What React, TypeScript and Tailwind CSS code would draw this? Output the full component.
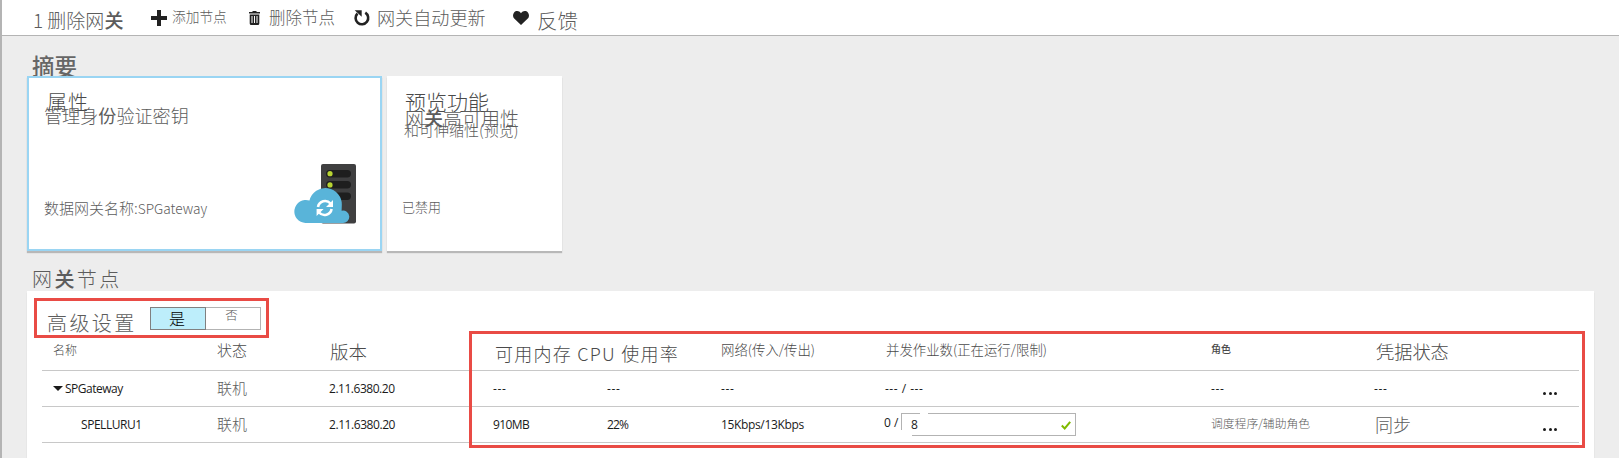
import React from "react";

const cjk = "block whitespace-nowrap font-['Noto_Sans_CJK_SC',sans-serif] font-light";
const latin = "block whitespace-nowrap font-['Open_Sans','Noto_Sans_CJK_SC',sans-serif] text-[12px] leading-[16px] text-[#1a1a1a]";

function PlusIcon() {
  return (
    <svg width="16" height="16" viewBox="0 0 16 16" className="block" fill="#222">
      <path d="M6 0h4v6h6v4h-6v6H6v-6H0V6h6z" />
    </svg>
  );
}

function TrashIcon() {
  return (
    <svg width="11" height="14" viewBox="0 0 11 14" className="block" fill="#222">
      <path d="M3.500 0h4v1H11v1.600H0V1h3.500z" />
      <path fillRule="evenodd" d="M.7 3.400h9.600V12.500q0 1.500-1.500 1.500H2.200Q.7 14 .7 12.500zM2.500 5v7h1V5zM5 5v7h1V5zM7.500 5v7h1V5z" />
    </svg>
  );
}

function RefreshIcon() {
  return (
    <svg width="16" height="16" viewBox="0 0 16 16" className="block">
      <path d="M11.300 2.700A6.300 6.300 0 1 1 3.500 3.500" fill="none" stroke="#222" strokeWidth="2.600" />
      <path d="M.7.300h7v6.500z" fill="#222" />
    </svg>
  );
}

function HeartIcon() {
  return (
    <svg width="16" height="14" viewBox="0 0 16 14" className="block" fill="#222">
      <path d="M8 14 1.200 7.600C-.4 5.900-.3 3 1.100 1.400 2.900-.5 6.300-.4 8 2.200 9.700-.4 13.100-.5 14.900 1.400 16.300 3 16.400 5.900 14.800 7.600z" />
    </svg>
  );
}

function GatewayIcon() {
  return (
    <svg width="62" height="60" viewBox="0 0 62 60" className="block">
      <rect x="27" y="0" width="35" height="59.500" rx="2" fill="#3f3f40" />
      <rect x="32" y="6" width="25" height="7.500" rx="3.700" fill="#1e1e1e" />
      <rect x="32" y="17" width="25" height="7.500" rx="3.700" fill="#1e1e1e" />
      <rect x="32" y="28.500" width="25" height="7.500" rx="3.700" fill="#1e1e1e" />
      <circle cx="36" cy="9.700" r="2.600" fill="#b8d432" />
      <circle cx="36" cy="20.900" r="2.600" fill="#b8d432" />
      <path
        d="M11.500 59A11.500 11.500 0 1 1 15.500 36.600 16.400 16.400 0 0 1 47.800 41.500L47.600 46.800A6.200 6.200 0 1 1 48.500 59z"
        fill="#59b4d9"
      />
      <g fill="none" stroke="#fff" strokeWidth="2.600">
        <path d="M24 43A7.200 7.200 0 0 1 36.500 39.500" />
        <path d="M37.600 45A7.200 7.200 0 0 1 25.100 48.500" />
      </g>
      <path d="M39 36v7h-7zM22.600 52v-7h7z" fill="#fff" />
    </svg>
  );
}

function Toolbar() {
  return (
    <header className="flex h-[36px] shrink-0 items-start border-b border-[#b4b4b4] bg-white text-[#5c5c5c]">
      <span className={`${cjk} ml-[31px] w-[118px] pt-[10px] text-[19px] leading-[19px]`}>1 删除网<span className="font-medium">关</span></span>
      <span className="w-[21px] pt-[10px]"><PlusIcon /></span>
      <span className={`${cjk} w-[77px] pt-[9px] text-[13.7px] leading-[14px]`}>添加节点</span>
      <span className="w-[20px] pt-[11px]"><TrashIcon /></span>
      <span className={`${cjk} w-[85px] pt-[9px] text-[16.500px] leading-[16px]`}>删除节点</span>
      <span className="w-[23px] pt-[10px]"><RefreshIcon /></span>
      <span className={`${cjk} w-[136px] pt-[8px] text-[18.100px] leading-[18px]`}>网关自动更新</span>
      <span className="w-[24px] pt-[11px]"><HeartIcon /></span>
      <span className={`${cjk} pt-[10px] text-[20.500px] leading-[20px]`}>反馈</span>
    </header>
  );
}

function SummaryCards() {
  return (
    <div className="flex gap-[5px]">
      <article className="flex h-[175px] w-[355px] justify-between border-2 border-[#9ad5f3] bg-white text-[#5c5c5c] shadow-[0_2px_1px_#b8b8b8]">
        <div className="pl-[15px]">
          <h3 className={`${cjk} mt-[14px] pl-[3px] text-[20px] leading-[20px] tracking-[1px] text-[#4a4a4a]`}>属性</h3>
          <p className={`${cjk} mt-[-6px] text-[18.100px] leading-[18px]`}>管理身<span className="font-normal">份</span>验证密钥</p>
          <p className={`${cjk} mt-[76px] text-[15px] leading-[15px]`}>
            数据网关名称:<span className="text-[13.7px]">SPGateway</span>
          </p>
        </div>
        <div className="mr-[24px] mt-[86px]"><GatewayIcon /></div>
      </article>
      <article className="h-[175px] w-[175px] bg-white pl-[16px] text-[#5c5c5c] shadow-[0_2px_1px_#b8b8b8]">
        <h3 className={`${cjk} pl-[2px] pt-[15px] text-[21px] leading-[20px] text-[#4a4a4a]`}>预览功能</h3>
        <p className={`${cjk} mt-[-2px] pl-[2px] text-[19px] leading-[18px]`}>网<span className="font-medium">关</span>高可用性</p>
        <p className={`${cjk} mt-[-5px] pl-[1px] text-[15px] leading-[15px]`}>和可伸缩性(预览)</p>
        <p className={`${cjk} ml-[-1px] mt-[63px] text-[13px] leading-[13px]`}>已禁用</p>
      </article>
    </div>
  );
}

function AdvancedToggle() {
  return (
    <div className="ml-[7px] flex h-[40px] w-[235px] border-[3px] border-[#e94b45] text-[#5c5c5c]">
      <span className={`${cjk} w-[113px] pl-[10px] pt-[12px] text-[20px] leading-[20px] tracking-[2.400px]`}>高级设置</span>
      <div className="mt-[6px] flex h-[23px]">
        <button className={`${cjk} flex h-[23px] w-[56px] justify-center border border-[#808080] bg-[#bdeefb] pr-[2px] pt-[2px] text-[16px] leading-[16px] text-black`}>是</button>
        <button className={`${cjk} flex h-[23px] w-[55px] justify-center border border-l-0 border-[#b3b3b3] pr-[3px] pt-[1px] text-[12.500px] leading-[12px]`}>否</button>
      </div>
    </div>
  );
}

const row =
  "grid grid-cols-[175px_113px_163px_114px_114px_164px_326px_164px_168px_36px] border-b border-[#c8c8c8]";

function More() {
  return (
    <button aria-label="More" className="mt-[21px] flex h-[3px] gap-[2.500px]">
      <i className="block size-[3px] rounded-full bg-[#1a1a1a]" />
      <i className="block size-[3px] rounded-full bg-[#1a1a1a]" />
      <i className="block size-[3px] rounded-full bg-[#1a1a1a]" />
    </button>
  );
}

function JobLimit() {
  return (
    <div className="flex">
      <span className={`${latin} ml-[-1px] w-[17px] pt-[8px]`}>0 /</span>
      <div className="relative mt-[6px] flex h-[23px] w-[175px] border border-[#b3b3b3]">
        <span className="absolute -top-px left-[18px] h-px w-[8px] bg-white" />
        <span className="absolute -bottom-px -left-px h-[6px] w-px bg-white" />
        <span className="absolute -bottom-px -left-px h-px w-[11px] bg-white" />
        <span className={`${latin} flex-1 pl-[9px] pt-[3px]`}>8</span>
        <svg width="10" height="9" viewBox="0 0 10 9" className="mr-[4px] mt-[7px]">
          <path d="M.8 4.500 3.700 7.400 9.200.8" fill="none" stroke="#7fba00" strokeWidth="2" />
        </svg>
      </div>
    </div>
  );
}

function NodesTable() {
  return (
    <div className="relative ml-[15px] w-[1537px]">
      <div className={`${row} h-[33px] text-[#4a4a4a]`}>
        <span className={`${cjk} pl-[11px] pt-[6px] text-[12px] leading-[12px]`}>名称</span>
        <span className={`${cjk} pt-[4px] text-[15px] leading-[15px]`}>状态</span>
        <span className={`${cjk} pt-[4px] text-[18.500px] leading-[18px]`}>版本</span>
        <span className={`${cjk} pl-[2px] pt-[6px] text-[18px] leading-[18px] tracking-[1.250px]`}>可用内存 CPU 使用率</span>
        <span />
        <span className={`${cjk} pt-[4px] text-[13.400px] leading-[14px]`}>网络(传入/传出)</span>
        <span className={`${cjk} pl-px pt-[4px] text-[13.400px] leading-[14px]`}>并发作业数(正在运行/限制)</span>
        <span className="block whitespace-nowrap pt-[6px] font-['Noto_Sans_CJK_SC',sans-serif] text-[10px] font-medium leading-[10px]">角色</span>
        <span className={`${cjk} pl-px pt-[4px] text-[18.200px] leading-[18px]`}>凭据状态</span>
        <span />
      </div>
      <div className={`${row} h-[36px]`}>
        <span className={`${latin} flex pl-[11px] pt-[10px] tracking-[-0.5px]`}>
          <svg width="10" height="5" viewBox="0 0 10 5" className="mr-[2px] mt-[5px]">
            <path d="M0 0h10L5 5z" fill="#1a1a1a" />
          </svg>
          SPGateway
        </span>
        <span className={`${cjk} pt-[9px] text-[15px] leading-[15px] text-[#5c5c5c]`}>联机</span>
        <span className={`${latin} -ml-px pt-[10px] tracking-[-0.47px]`}>2.11.6380.20</span>
        <span className={`${latin} pt-[10px] tracking-[0.7px]`}>---</span>
        <span className={`${latin} pt-[10px] tracking-[0.7px]`}>---</span>
        <span className={`${latin} pt-[10px] tracking-[0.7px]`}>---</span>
        <span className={`${latin} pt-[10px] tracking-[0.5px]`}>--- / ---</span>
        <span className={`${latin} pt-[10px] tracking-[0.7px]`}>---</span>
        <span className={`${latin} -ml-px pt-[10px] tracking-[0.7px]`}>---</span>
        <More />
      </div>
      <div className={`${row} h-[36px]`}>
        <span className={`${latin} pl-[39px] pt-[10px] tracking-[-0.45px]`}>SPELLURU1</span>
        <span className={`${cjk} pt-[9px] text-[15px] leading-[15px] text-[#5c5c5c]`}>联机</span>
        <span className={`${latin} -ml-px pt-[10px] tracking-[-0.43px]`}>2.11.6380.20</span>
        <span className={`${latin} pt-[10px] tracking-[-0.6px]`}>910MB</span>
        <span className={`${latin} pt-[10px] tracking-[-0.8px]`}>22%</span>
        <span className={`${latin} pt-[10px] tracking-[-0.35px]`}>15Kbps/13Kbps</span>
        <JobLimit />
        <span className={`${cjk} pt-[10px] text-[11.800px] leading-[12px] text-[#5c5c5c]`}>调度程序/辅助角色</span>
        <span className={`${cjk} pt-[8px] text-[18px] leading-[18px] text-[#5c5c5c]`}>同步</span>
        <More />
      </div>
      <div className="pointer-events-none absolute left-[427px] top-[-7px] h-[117px] w-[1116px] border-[3px] border-[#e94b45]" />
    </div>
  );
}

export default function App() {
  return (
    <div className="flex h-[458px] w-[1619px] flex-col overflow-hidden border-l-2 border-[#b4b4b4] bg-[#ededed]">
      <Toolbar />
      <main className="flex-1 pl-[25px]">
        <h2 className="h-[40px] whitespace-nowrap pl-[5px] pt-[18px] font-['Noto_Sans_CJK_SC',sans-serif] text-[22.500px] font-medium leading-[23px] text-[#666]">摘要</h2>
        <SummaryCards />
        <h2 className={`${cjk} h-[40px] pl-[5px] pt-[18px] text-[20px] leading-[20px] tracking-[2.400px] text-[#5c5c5c]`}>网<span className="font-medium">关</span>节点</h2>
        <section className="h-[180px] w-[1567px] bg-white pt-[7px] shadow-[0_2px_1px_#c8c8c8]">
          <AdvancedToggle />
          <NodesTable />
        </section>
      </main>
    </div>
  );
}
